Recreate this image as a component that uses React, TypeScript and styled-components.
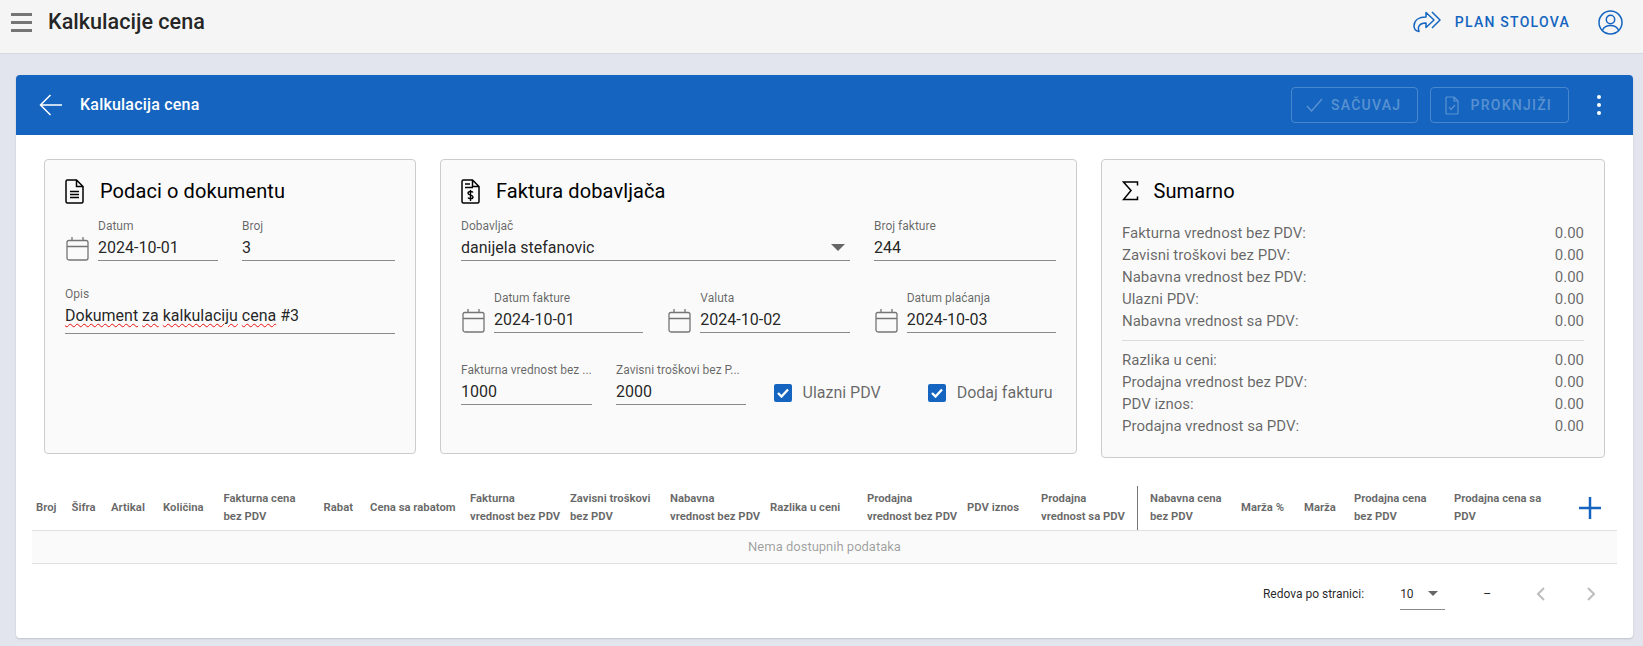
import React from 'react';
import styled, { createGlobalStyle } from 'styled-components';

const BLUE = '#1565c0';

const GlobalStyle = createGlobalStyle`
  html, body {
    margin: 0;
    padding: 0;
    background: #e2e5ee;
    font-family: Roboto, "Liberation Sans", sans-serif;
    overflow: hidden;
  }
  * {
    box-sizing: border-box;
  }
`;

const CalendarIcon = () => (
  <svg width="23" height="25" viewBox="0 0 23 25" fill="none" stroke="#757575" strokeWidth="1.3">
    <rect x="1" y="4.5" width="21" height="19.5" rx="2" />
    <path d="M1 10.5h21M6 1v3.5M17 1v3.5" />
  </svg>
);

const DocIcon = () => (
  <svg width="19" height="25" viewBox="0 0 19 25" fill="none" stroke="#000" strokeWidth="1.5">
    <path d="M2.5 1h9l6.500 6.500v15a1.500 1.500 0 0 1-1.500 1.500h-14a1.500 1.500 0 0 1-1.500-1.500v-20a1.500 1.500 0 0 1 1.500-1.500zM11.500 1v6.500h6.500" />
    <path d="M5 12.500h9M5 15.500h9M5 18.500h9" />
  </svg>
);

const InvoiceIcon = () => (
  <svg width="19" height="25" viewBox="0 0 19 25" fill="none" stroke="#000" strokeWidth="1.5">
    <path d="M2.500 1h9l6.500 6.500v15a1.500 1.500 0 0 1-1.500 1.500h-14a1.500 1.500 0 0 1-1.500-1.500v-20a1.500 1.500 0 0 1 1.500-1.500zM11.500 1v6.500h6.500" />
    <path d="M4 5h5M4 8.500h8" />
    <path d="M12 13.500c-.5-.8-1.400-1-2.500-1-1.400 0-2.500.6-2.500 1.800 0 2.500 5 1.200 5 3.700 0 1.200-1.100 1.800-2.500 1.800-1.100 0-2-.3-2.600-1.100M9.500 11v11" strokeWidth="1.400" />
  </svg>
);

const SigmaIcon = () => (
  <svg width="17" height="20" viewBox="0 0 17 20" fill="none" stroke="#000" strokeWidth="1.500">
    <path d="M15.500 4.500V1H1.500l7.500 8.500L1.500 18.500h14v-3" />
  </svg>
);

const BackIcon = () => (
  <svg width="23" height="22" viewBox="0 0 23 22" fill="none" stroke="#fff" strokeWidth="1.500">
    <path d="M23 11H2M11.500 1 1.500 11l10 10" />
  </svg>
);

const ShareIcon = () => (
  <svg width="29" height="24" viewBox="0 0 29 24" fill="none" stroke={BLUE} strokeWidth="1.500" strokeLinejoin="round">
    <path d="M13 2.500 21 10l-8 7.500V13c-4.500 0-6.500 1.500-7.500 4-.3 1.500 0 3 .5 4.500-3-.5-5-2.500-5-5.500C1 10 6 7 13 7z" />
    <path d="M19 2l8 8-8 8" />
  </svg>
);

const AccountIcon = () => (
  <svg width="25" height="25" viewBox="0 0 25 25" fill="none" stroke={BLUE} strokeWidth="1.500">
    <circle cx="12.500" cy="12.500" r="11.500" />
    <circle cx="12.500" cy="9.500" r="4.200" />
    <path d="M4.500 20c1.500-3 4.500-4.500 8-4.500s6.500 1.500 8 4.500" />
  </svg>
);

const Page = styled.div`
  width: 1643px;
  height: 646px;
  overflow: hidden;
`;

const TopBar = styled.header`
  height: 54px;
  display: flex;
  align-items: center;
  padding: 0 20px 9px 11px;
  background: #f5f5f5;
  border-bottom: 1px solid #d6d9e0;
`;

const MenuLines = styled.div`
  width: 21px;
  display: flex;
  flex-direction: column;
  gap: 5px;
  span {
    height: 3px;
    background: #757575;
  }
`;

const PageTitle = styled.h1`
  margin: 0 0 0 16px;
  font-size: 21.600px;
  line-height: 28px;
  font-weight: 500;
  color: rgba(0, 0, 0, 0.87);
`;

const PlanButton = styled.div`
  margin-left: auto;
  display: flex;
  align-items: center;
  gap: 13px;
  font-size: 14px;
  font-weight: 500;
  letter-spacing: 1.25px;
  color: ${BLUE};
`;

const AccountWrap = styled.div`
  display: flex;
  margin-left: 28px;
`;

const Main = styled.main`
  padding: 21px 10px 0 16px;
`;

const Card = styled.section`
  height: 563px;
  background: #fff;
  border-radius: 4px;
  box-shadow: 0 1px 2px rgba(0, 0, 0, 0.15);
  overflow: hidden;
`;

const CardHeader = styled.div`
  height: 60px;
  display: flex;
  align-items: center;
  padding-left: 23px;
  background: ${BLUE};
`;

const CardTitle = styled.div`
  margin: 0 0 2px 18px;
  font-size: 16px;
  font-weight: 500;
  letter-spacing: 0.2px;
  color: #fff;
`;

const DisabledButton = styled.div<{ $width: number; $gap: number }>`
  width: ${(p) => p.$width}px;
  height: 36px;
  display: flex;
  align-items: center;
  gap: ${(p) => p.$gap}px;
  padding-left: 14px;
  margin-right: 12px;
  border: 1px solid rgba(255, 255, 255, 0.22);
  border-radius: 4px;
  font-size: 14px;
  font-weight: 500;
  letter-spacing: 1.25px;
  color: rgba(255, 255, 255, 0.3);
`;

const HeaderActions = styled.div`
  margin-left: auto;
  display: flex;
  align-items: center;
`;

const Kebab = styled.div`
  width: 24px;
  margin: 0 22px 0 6px;
  display: flex;
  flex-direction: column;
  align-items: center;
  gap: 3.500px;
  span {
    width: 4.500px;
    height: 4.500px;
    border-radius: 50%;
    background: #fff;
  }
`;

const Panels = styled.div`
  display: flex;
  align-items: flex-start;
  gap: 24px;
  padding: 24px 28px 0;
`;

const Panel = styled.div<{ $width: number; $height: number }>`
  width: ${(p) => p.$width}px;
  height: ${(p) => p.$height}px;
  padding: 19px 20px 20px;
  background: #fafafa;
  border: 1px solid #cccccc;
  border-radius: 4px;
`;

const PanelHead = styled.div<{ $gap: number }>`
  height: 24px;
  display: flex;
  align-items: center;
  gap: ${(p) => p.$gap}px;
  font-size: 20px;
  letter-spacing: 0.1px;
  color: #000;
`;

const FormRow = styled.div<{ $mt: number }>`
  display: flex;
  align-items: flex-end;
  gap: 24px;
  margin-top: ${(p) => p.$mt}px;
`;

const Field = styled.div<{ $width?: number; $extra?: number }>`
  ${(p) => (p.$width ? `width: ${p.$width}px; flex: none;` : 'flex: 1; min-width: 0;')}
  padding-bottom: ${(p) => p.$extra ?? 0}px;
  border-bottom: 1px solid #8a8a8a;
`;

const Label = styled.div`
  height: 16px;
  font-size: 12px;
  line-height: 14px;
  color: rgba(0, 0, 0, 0.6);
  white-space: nowrap;
`;

const Value = styled.div`
  height: 25px;
  font-size: 16px;
  line-height: 25px;
  color: rgba(0, 0, 0, 0.87);
`;

const DateWrap = styled.div<{ $width?: number }>`
  ${(p) => (p.$width ? `width: ${p.$width}px; flex: none;` : 'flex: 1;')}
  display: flex;
  align-items: flex-end;
  gap: 9px;
  min-width: 0;
  svg {
    flex: none;
    margin-left: 1px;
  }
`;

const Misspelled = styled.span`
  text-decoration: underline wavy #e81010 1px;
  text-underline-offset: 2px;
`;

const SelectValue = styled(Value)`
  display: flex;
  align-items: center;
  justify-content: space-between;
  padding-right: 5px;
`;

const CaretDown = styled.span`
  width: 0;
  height: 0;
  border-left: 7.500px solid transparent;
  border-right: 7.500px solid transparent;
  border-top: 7px solid #666;
`;

const CheckGroup = styled.div`
  display: flex;
  gap: 47.500px;
  margin-left: 4px;
  padding-bottom: 3px;
`;

const CheckItem = styled.div`
  display: flex;
  align-items: center;
  gap: 10.500px;
  font-size: 16px;
  color: rgba(0, 0, 0, 0.6);
  white-space: nowrap;
`;

const CheckBox = styled.span`
  width: 18px;
  height: 18px;
  display: flex;
  align-items: center;
  justify-content: center;
  border-radius: 2px;
  background: ${BLUE};
`;

const SummaryList = styled.div`
  margin-top: 19px;
`;

const SummaryRow = styled.div`
  height: 22px;
  display: flex;
  justify-content: space-between;
  align-items: center;
  font-size: 15px;
  color: rgba(0, 0, 0, 0.6);
`;

const SummaryDivider = styled.hr`
  margin: 8px 0;
  border: 0;
  border-top: 1px solid #dcdcdc;
`;

const Table = styled.div`
  margin: 28px 16px 0;
`;

const TableHeader = styled.div`
  height: 45px;
  display: grid;
  grid-template-columns: 35.500px 39.500px 52px 60.500px 100px 46.500px 100px 100px 100px 100px 97px 100px 74px 101px 99px 63px 50px 100px 125px 42px;
  border-bottom: 1px solid #e0e0e0;
`;

const HeadCell = styled.div<{ $divider?: boolean; $pad?: number }>`
  display: flex;
  align-items: center;
  padding-left: ${(p) => p.$pad ?? 4}px;
  font-size: 11.300px;
  line-height: 18px;
  font-weight: 700;
  white-space: pre-line;
  color: rgba(0, 0, 0, 0.6);
  ${(p) => (p.$divider ? 'border-right: 1px solid #777;' : '')}
`;

const AddCell = styled.div`
  display: flex;
  align-items: center;
  padding-left: 4px;
`;

const EmptyRow = styled.div`
  height: 33px;
  display: flex;
  align-items: center;
  justify-content: center;
  padding-bottom: 1px;
  background: #fafafa;
  border-bottom: 1px solid #e0e0e0;
  font-size: 13px;
  color: rgba(0, 0, 0, 0.38);
`;

const Pagination = styled.div`
  height: 60px;
  display: flex;
  align-items: center;
  justify-content: flex-end;
  padding-right: 14px;
  font-size: 12px;
  color: rgba(0, 0, 0, 0.87);
`;

const PerPage = styled.div`
  width: 45px;
  height: 32px;
  margin-left: 36px;
  display: flex;
  align-items: center;
  justify-content: space-between;
  padding-right: 7px;
  border-bottom: 1px solid #8a8a8a;
`;

const SmallCaret = styled.span`
  width: 0;
  height: 0;
  border-left: 5px solid transparent;
  border-right: 5px solid transparent;
  border-top: 5px solid #666;
`;

const Dash = styled.span`
  margin-left: 38px;
  margin-right: 38px;
`;

const NavButton = styled.div`
  display: flex;
  & + & {
    margin-left: 26px;
  }
`;

const columns: { text: string; divider?: boolean; pad?: number }[] = [
  { text: 'Broj' },
  { text: 'Šifra' },
  { text: 'Artikal' },
  { text: 'Količina' },
  { text: 'Fakturna cena\nbez PDV' },
  { text: 'Rabat' },
  { text: 'Cena sa rabatom' },
  { text: 'Fakturna\nvrednost bez PDV' },
  { text: 'Zavisni troškovi\nbez PDV' },
  { text: 'Nabavna\nvrednost bez PDV' },
  { text: 'Razlika u ceni' },
  { text: 'Prodajna\nvrednost bez PDV' },
  { text: 'PDV iznos' },
  { text: 'Prodajna\nvrednost sa PDV', divider: true },
  { text: 'Nabavna cena\nbez PDV', pad: 12 },
  { text: 'Marža %' },
  { text: 'Marža' },
  { text: 'Prodajna cena\nbez PDV' },
  { text: 'Prodajna cena sa\nPDV' },
];

const summaryTop = [
  'Fakturna vrednost bez PDV:',
  'Zavisni troškovi bez PDV:',
  'Nabavna vrednost bez PDV:',
  'Ulazni PDV:',
  'Nabavna vrednost sa PDV:',
];

const summaryBottom = [
  'Razlika u ceni:',
  'Prodajna vrednost bez PDV:',
  'PDV iznos:',
  'Prodajna vrednost sa PDV:',
];

const Check = () => (
  <svg width="12" height="10" viewBox="0 0 12 10" fill="none" stroke="#fff" strokeWidth="2.400">
    <path d="M1 5l3.500 3.500L11 1.500" />
  </svg>
);

const DateField: React.FC<{ label: string; value: string; width?: number }> = ({ label, value, width }) => (
  <DateWrap $width={width}>
    <CalendarIcon />
    <Field>
      <Label>{label}</Label>
      <Value>{value}</Value>
    </Field>
  </DateWrap>
);

export default function App() {
  return (
    <Page>
      <GlobalStyle />
      <TopBar>
        <MenuLines>
          <span />
          <span />
          <span />
        </MenuLines>
        <PageTitle>Kalkulacije cena</PageTitle>
        <PlanButton>
          <ShareIcon />
          PLAN STOLOVA
        </PlanButton>
        <AccountWrap>
          <AccountIcon />
        </AccountWrap>
      </TopBar>
      <Main>
        <Card>
          <CardHeader>
            <BackIcon />
            <CardTitle>Kalkulacija cena</CardTitle>
            <HeaderActions>
              <DisabledButton $width={127} $gap={8}>
                <svg width="17" height="14" viewBox="0 0 17 14" fill="none" stroke="rgba(255,255,255,0.3)" strokeWidth="1.300">
                  <path d="M1 8l4.500 5L16 1" />
                </svg>
                SAČUVAJ
              </DisabledButton>
              <DisabledButton $width={139} $gap={11.5}>
                <svg width="14" height="19" viewBox="0 0 14 19" fill="none" stroke="rgba(255,255,255,0.3)" strokeWidth="1.200">
                  <path d="M2 1h7l4 4v12a1 1 0 0 1-1 1H2a1 1 0 0 1-1-1V2a1 1 0 0 1 1-1zM9 1v4h4M4 11l2 2.500L10 9" />
                </svg>
                PROKNJIŽI
              </DisabledButton>
              <Kebab>
                <span />
                <span />
                <span />
              </Kebab>
            </HeaderActions>
          </CardHeader>

          <Panels>
            <Panel $width={372} $height={295}>
              <PanelHead $gap={16}>
                <DocIcon />
                Podaci o dokumentu
              </PanelHead>
              <FormRow $mt={16}>
                <DateField label="Datum" value="2024-10-01" width={153} />
                <Field>
                  <Label>Broj</Label>
                  <Value>3</Value>
                </Field>
              </FormRow>
              <FormRow $mt={26}>
                <Field $extra={5}>
                  <Label>Opis</Label>
                  <Value>
                    <Misspelled>Dokument</Misspelled> <Misspelled>za</Misspelled>{' '}
                    <Misspelled>kalkulaciju</Misspelled> <Misspelled>cena</Misspelled> #3
                  </Value>
                </Field>
              </FormRow>
            </Panel>

            <Panel $width={637} $height={295}>
              <PanelHead $gap={16}>
                <InvoiceIcon />
                Faktura dobavljača
              </PanelHead>
              <FormRow $mt={16}>
                <Field $width={389}>
                  <Label>Dobavljač</Label>
                  <SelectValue>
                    danijela stefanovic
                    <CaretDown />
                  </SelectValue>
                </Field>
                <Field>
                  <Label>Broj fakture</Label>
                  <Value>244</Value>
                </Field>
              </FormRow>
              <FormRow $mt={30}>
                <DateField label="Datum fakture" value="2024-10-01" />
                <DateField label="Valuta" value="2024-10-02" />
                <DateField label="Datum plaćanja" value="2024-10-03" />
              </FormRow>
              <FormRow $mt={30}>
                <Field $width={131}>
                  <Label>Fakturna vrednost bez ...</Label>
                  <Value>1000</Value>
                </Field>
                <Field $width={130}>
                  <Label>Zavisni troškovi bez P...</Label>
                  <Value>2000</Value>
                </Field>
                <CheckGroup>
                  <CheckItem>
                    <CheckBox>
                      <Check />
                    </CheckBox>
                    Ulazni PDV
                  </CheckItem>
                  <CheckItem>
                    <CheckBox>
                      <Check />
                    </CheckBox>
                    Dodaj fakturu
                  </CheckItem>
                </CheckGroup>
              </FormRow>
            </Panel>

            <Panel $width={504} $height={299}>
              <PanelHead $gap={14.5}>
                <SigmaIcon />
                Sumarno
              </PanelHead>
              <SummaryList>
                {summaryTop.map((label) => (
                  <SummaryRow key={label}>
                    <span>{label}</span>
                    <span>0.00</span>
                  </SummaryRow>
                ))}
                <SummaryDivider />
                {summaryBottom.map((label) => (
                  <SummaryRow key={label}>
                    <span>{label}</span>
                    <span>0.00</span>
                  </SummaryRow>
                ))}
              </SummaryList>
            </Panel>
          </Panels>

          <Table>
            <TableHeader>
              {columns.map((col) => (
                <HeadCell key={col.text} $divider={col.divider} $pad={col.pad}>
                  <span>{col.text}</span>
                </HeadCell>
              ))}
              <AddCell>
                <svg width="22" height="22" viewBox="0 0 22 22" fill="none" stroke={BLUE} strokeWidth="2.500">
                  <path d="M11 0v22M0 11h22" />
                </svg>
              </AddCell>
            </TableHeader>
            <EmptyRow>Nema dostupnih podataka</EmptyRow>
            <Pagination>
              <span>Redova po stranici:</span>
              <PerPage>
                10
                <SmallCaret />
              </PerPage>
              <Dash>–</Dash>
              <NavButton>
                <svg width="24" height="24" viewBox="0 0 24 24" fill="none" stroke="#bdbdbd" strokeWidth="2">
                  <path d="M15 6l-6 6 6 6" />
                </svg>
              </NavButton>
              <NavButton>
                <svg width="24" height="24" viewBox="0 0 24 24" fill="none" stroke="#bdbdbd" strokeWidth="2">
                  <path d="M9 6l6 6-6 6" />
                </svg>
              </NavButton>
            </Pagination>
          </Table>
        </Card>
      </Main>
    </Page>
  );
}
